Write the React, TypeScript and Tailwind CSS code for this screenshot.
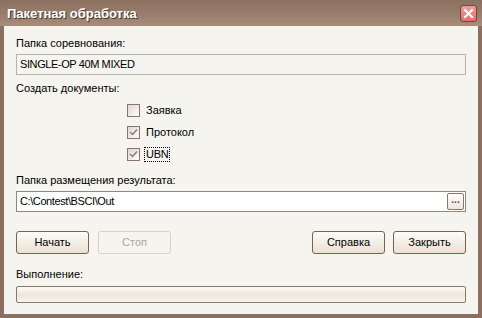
import React from "react";

const font = { fontFamily: '"Liberation Sans", Arial, sans-serif' };

function Checkbox({ label, checked, focus }: { label: string; checked?: boolean; focus?: boolean }) {
  return (
    <div className="flex items-center h-[13px]">
      <div className="w-[13px] h-[13px] border border-[#8c7464] bg-gradient-to-br from-[#dcd6cc] to-white flex items-center justify-center">
        {checked && (
          <svg width="9" height="9" viewBox="0 0 9 9">
            <path d="M1 4 L3.5 6.5 L8 1.5" stroke="#8c7a6c" strokeWidth="1.4" fill="none" />
          </svg>
        )}
      </div>
      <span
        className={
          "ml-[5px] text-[11px] leading-[13px] text-black px-[1px] " +
          (focus ? "outline outline-1 outline-dotted outline-black tracking-[-0.3px]" : "")
        }
      >
        {label}
      </span>
    </div>
  );
}

function Btn({ label, disabled }: { label: string; disabled?: boolean }) {
  return (
    <div
      className={
        "w-[73px] h-[23px] rounded-[3px] flex items-center justify-center text-[11px] border " +
        (disabled
          ? "border-[#d8d0c8] text-[#aca899] bg-[#f5f4ef]"
          : "border-[#7a6050] text-black bg-gradient-to-b from-[#fcfbf8] to-[#e8e2d4]")
      }
    >
      {label}
    </div>
  );
}

export default function App() {
  return (
    <div className="w-[482px] h-[318px] bg-[#8b6f60] flex flex-col select-none" style={font}>
      <div className="h-[26px] flex items-center justify-between pl-[7px] pr-[5px] bg-gradient-to-b from-[#8c7060] via-[#977b6b] to-[#a88c7c] rounded-t-[6px]">
        <span
          className="text-white font-bold text-[13px] leading-none"
          style={{ textShadow: "1px 1px 0 #4a3a30" }}
        >
          Пакетная обработка
        </span>
        <div className="w-[17px] h-[17px] rounded-[3px] border border-[#6a4a40] bg-gradient-to-b from-[#f49a98] to-[#e86a68] flex items-center justify-center">
          <svg width="11" height="11" viewBox="0 0 11 11">
            <path d="M2 2 L9 9 M9 2 L2 9" stroke="white" strokeWidth="2.2" strokeLinecap="square" />
          </svg>
        </div>
      </div>
      <div className="flex-1 mx-[4px] mb-[4px] bg-[#f5f4ef] flex flex-col px-[12px] pt-[11px] text-[11px] text-black">
        <div className="leading-[13px]">Папка соревнования:</div>
        <div className="mt-[4px] h-[21px] border border-[#b9b1a8] bg-[#f5f4ef] flex items-center pl-[3px] leading-none tracking-[-0.4px]">
          SINGLE-OP 40M MIXED
        </div>
        <div className="mt-[7px] leading-[13px]">Создать документы:</div>
        <div className="ml-[111px] mt-[9px] flex flex-col gap-[9px]">
          <Checkbox label="Заявка" />
          <Checkbox label="Протокол" checked />
          <Checkbox label="UBN" checked focus />
        </div>
        <div className="mt-[13px] leading-[13px]">Папка размещения результата:</div>
        <div className="mt-[4px] h-[21px] border border-[#8c8a84] bg-white flex items-center justify-between pl-[3px] pr-[1px]">
          <span className="leading-none tracking-[-0.4px]">C:\Contest\BSCI\Out</span>
          <div className="w-[17px] h-[17px] rounded-[2px] border border-[#8a7868] bg-gradient-to-b from-white to-[#ece6da] flex items-center justify-center">
            <span className="text-[10px] leading-none font-bold text-[#5a4a40] -mt-[3px]">...</span>
          </div>
        </div>
        <div className="mt-[19px] flex items-center">
          <Btn label="Начать" />
          <div className="w-[9px]" />
          <Btn label="Стоп" disabled />
          <div className="flex-1" />
          <Btn label="Справка" />
          <div className="w-[8px]" />
          <Btn label="Закрыть" />
        </div>
        <div className="mt-[14px] leading-[13px]">Выполнение:</div>
        <div className="mt-[5px] h-[17px] rounded-[2px] border border-[#8a7868] bg-gradient-to-b from-[#fbfaf6] via-[#ece7dc] to-[#f6f4ee]" />
      </div>
    </div>
  );
}
